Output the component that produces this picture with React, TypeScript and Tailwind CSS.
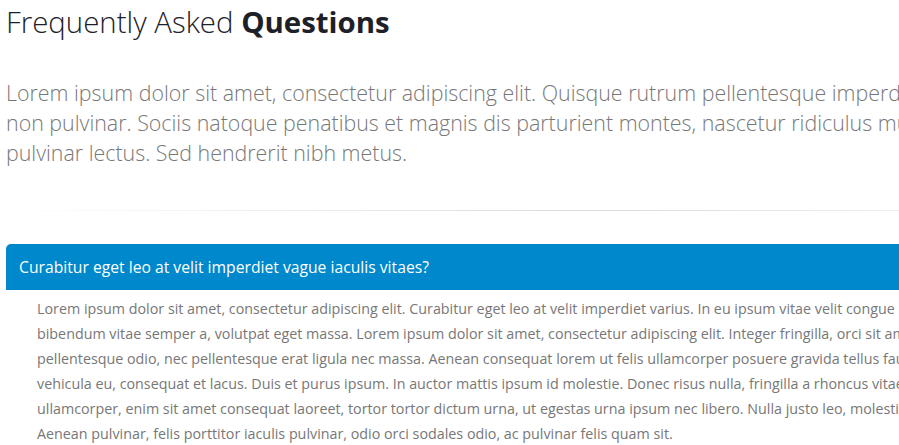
export default function App() {
  return (
    <div className="h-[445px] w-[899px] overflow-hidden bg-white font-['Open_Sans',sans-serif]">
      <div className="w-[1170px] pl-[6px]">
        <h1 className="pt-[4px] text-[29.4px] leading-[36px] font-light text-[#1d2127]">
          Frequently Asked <strong className="font-bold">Questions</strong>
        </h1>

        <p className="mt-[38px] whitespace-nowrap text-[21.4px] leading-[30px] font-light text-[#777]">
          Lorem ipsum dolor sit amet, consectetur adipiscing elit. Quisque rutrum pellentesque imperdiet. Nulla lacinia iaculis nulla
          <br />
          non pulvinar. Sociis natoque penatibus et magnis dis parturient montes, nascetur ridiculus mus. Ut eu risus enim, ut
          <br />
          pulvinar lectus. Sed hendrerit nibh metus.
        </p>

        <hr className="mt-[42px] h-px border-0 bg-gradient-to-r from-transparent via-[#dbdbdb] to-transparent" />

        <div className="mt-[33px]">
          <div className="rounded-t-[5px] bg-[#0088cc] px-[13px] py-[10px] text-[15.7px] leading-[26px] text-white">
            Curabitur eget leo at velit imperdiet vague iaculis vitaes?
          </div>
          <div className="pt-[6px] pl-[31px] pr-[15px]">
            <p className="whitespace-nowrap text-[14.3px] leading-[25px] text-[#777]">
              Lorem ipsum dolor sit amet, consectetur adipiscing elit. Curabitur eget leo at velit imperdiet varius. In eu ipsum vitae velit congue iaculis vitae at risus. Nullam tortor nunc,
              <br />
              bibendum vitae semper a, volutpat eget massa. Lorem ipsum dolor sit amet, consectetur adipiscing elit. Integer fringilla, orci sit amet posuere auctor, orci eros
              <br />
              pellentesque odio, nec pellentesque erat ligula nec massa. Aenean consequat lorem ut felis ullamcorper posuere gravida tellus faucibus. Maecenas dolor elit, pulvinar eu
              <br />
              vehicula eu, consequat et lacus. Duis et purus ipsum. In auctor mattis ipsum id molestie. Donec risus nulla, fringilla a rhoncus vitae, semper a massa. Vivamus
              <br />
              ullamcorper, enim sit amet consequat laoreet, tortor tortor dictum urna, ut egestas urna ipsum nec libero. Nulla justo leo, molestie vel tempor nec, egestas at massa.
              <br />
              Aenean pulvinar, felis porttitor iaculis pulvinar, odio orci sodales odio, ac pulvinar felis quam sit.
            </p>
          </div>
        </div>
      </div>
    </div>
  );
}
